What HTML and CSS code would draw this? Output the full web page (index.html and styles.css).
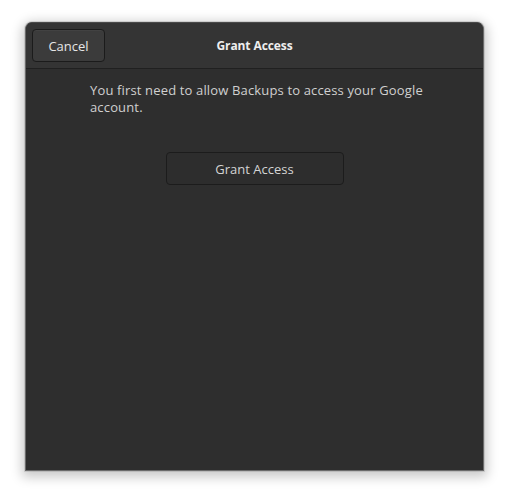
FILE: index.html
```html
<!DOCTYPE html>
<html>
<head>
<meta charset="utf-8">
<link rel="stylesheet" href="styles.css">
</head>
<body>
<div class="window">
  <div class="header">
    <button class="btn btn-cancel">Cancel</button>
    <div class="title">Grant Access</div>
  </div>
  <div class="content">
    <p class="message">You first need to allow Backups to access your Google account.</p>
    <button class="btn btn-grant">Grant Access</button>
  </div>
</div>
</body>
</html>
```
FILE: styles.css
```css
html, body {
  margin: 0;
  padding: 0;
  background: #ffffff;
}
body {
  width: 510px;
  height: 500px;
  padding: 22px 0 0 25px;
  box-sizing: border-box;
  font-family: "Open Sans", "DejaVu Sans", sans-serif;
}
.window {
  width: 459px;
  height: 449px;
  background: #2e2e2e;
  border-radius: 7px 7px 0 0;
  border: 1px solid #6a6a6a;
  border-top-color: #4a4a4a;
  box-sizing: border-box;
  box-shadow: 0 3px 12px 3px rgba(0,0,0,0.22), 0 0 0 1px rgba(0,0,0,0.1);
  display: flex;
  flex-direction: column;
  overflow: hidden;
}
.header {
  height: 46px;
  flex: none;
  background: #343434;
  border-bottom: 1px solid #202020;
  display: flex;
  align-items: center;
  padding: 0 6px;
  position: relative;
  box-sizing: border-box;
}
.title {
  position: absolute;
  left: 0;
  right: 0;
  text-align: center;
  font-weight: 700;
  font-size: 12px;
  letter-spacing: -0.1px;
  color: #eeeeee;
  pointer-events: none;
}
.btn {
  font-family: inherit;
  font-size: 13px;
  color: #e6e6e6;
  border-radius: 4px;
  height: 33px;
  box-sizing: border-box;
  padding: 0;
}
.btn-cancel {
  width: 73px;
  background: #3b3b3b;
  border: 1px solid #1b1b1b;
  box-shadow: inset 0 1px 0 rgba(255,255,255,0.04);
}
.content {
  display: flex;
  flex-direction: column;
  align-items: center;
  padding: 13px 0 0 0;
}
.message {
  margin: 0 60px 0 64px;
  align-self: stretch;
  font-size: 13px;
  line-height: 17px;
  letter-spacing: 0.15px;
  color: #d0d0d0;
}
.btn-grant {
  margin-top: 36px;
  width: 178px;
  background: #2d2d2d;
  border: 1px solid #1c1c1c;
  color: #d4d4d4;
}
```
